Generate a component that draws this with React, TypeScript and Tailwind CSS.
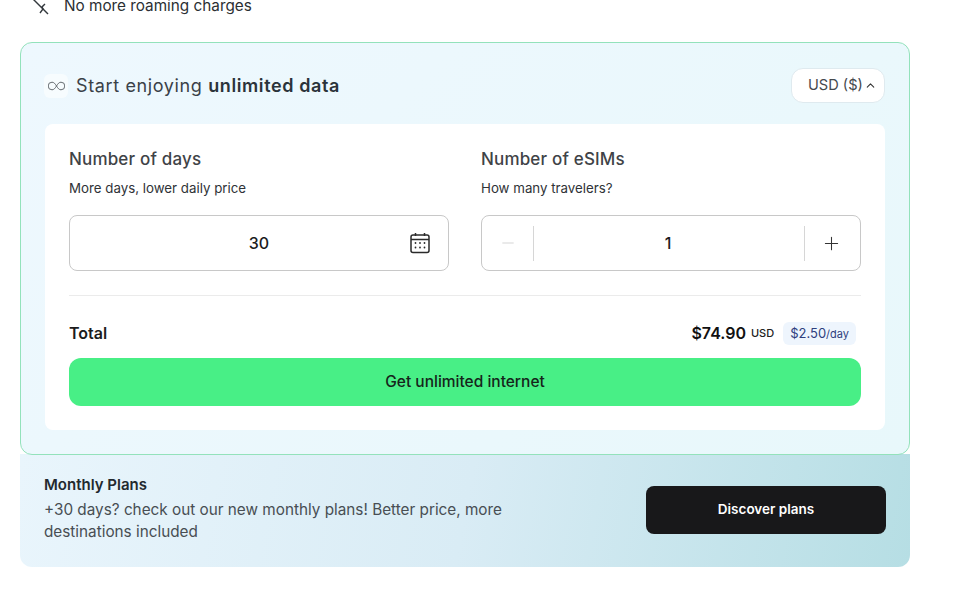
import { Minus, Plus, ChevronUp } from "lucide-react";

export default function App() {
  return (
    <div className="w-[954px] h-[595px] overflow-hidden bg-white text-[#1f2328] font-['Inter','Liberation_Sans',sans-serif]">
      <div className="flex items-center h-5 -mt-[4px] pl-[30px] gap-[14px] text-[15.3px] text-[#2b2f33]">
        <svg width="20" height="20" viewBox="0 0 20 20" fill="none" stroke="#33383d" strokeWidth="1.4" className="-mt-[2px]">
          <path d="M3 4 L18 19" />
          <path d="M10 18l3-4-1-2 3-3" />
        </svg>
        <span>No more roaming charges</span>
      </div>

      <div className="ml-5 mt-[26px] w-[890px]">
        <div className="relative z-10 h-[413px] rounded-xl border border-[#93e2bb] bg-[linear-gradient(135deg,#eef8fe,#e8f8fb)] px-6 pt-[25px]">
          <div className="flex items-center justify-between h-[35px]">
            <div className="flex items-center gap-[8px]">
              <span className="flex h-6 w-6 items-center justify-center rounded-md bg-[#f7fcfe] -ml-[1px]">
                <svg width="17" height="10" viewBox="0 0 17 10" fill="none" stroke="#666c71" strokeWidth="1">
                  <path d="M8.5 5C7 2.5 5.8 1.2 4 1.2a3.8 3.8 0 0 0 0 7.6c1.8 0 3-1.3 4.5-3.8s2.700-3.800 4.500-3.800a3.800 3.800 0 0 1 0 7.600c-1.800 0-3-1.300-4.500-3.800z" />
                </svg>
              </span>
              <span className="text-[18px] tracking-[0.035em] text-[#3a4148]">
                Start enjoying <b className="font-semibold tracking-[0.033em] text-[#2b333a]">unlimited data</b>
              </span>
            </div>
            <div className="flex h-[35px] w-[94px] items-center justify-start gap-[1px] rounded-xl border border-[#dfeaef] bg-white pl-4 text-[14.6px] text-[#45494d]">
              USD ($)
              <ChevronUp size={13} strokeWidth={2} className="text-[#333]" />
            </div>
          </div>

          <div className="mt-[21px] h-[306px] rounded-lg bg-white px-6 pt-[25px]">
            <div className="grid grid-cols-2 gap-8">
              <div>
                <div className="text-[17px] tracking-[0.01em] leading-[20px] font-medium text-[#3f4347]">Number of days</div>
                <div className="mt-[10px] text-[13.3px] leading-[18px] text-[#2f3337]">More days, lower daily price</div>
                <div className="relative mt-[18px] flex h-14 items-center justify-center rounded-lg border border-[#c8c8c8] text-[16px] font-medium text-[#1c1c1c]">
                  30
                  <svg width="22" height="22" viewBox="0 0 22 22" fill="none" stroke="#2b2b2b" strokeWidth="1.5" className="absolute right-[17px] top-[16px]">
                    <rect x="2" y="3" width="18" height="17.500" rx="2" />
                    <path d="M2 7.500h18M6.500 1v3M15.500 1v3" />
                    <g stroke="none" fill="#2b2b2b">
                      <circle cx="6.500" cy="11" r="0.900" />
                      <circle cx="11" cy="11" r="0.900" />
                      <circle cx="15.500" cy="11" r="0.900" />
                      <circle cx="6.500" cy="15.500" r="0.900" />
                      <circle cx="11" cy="15.500" r="0.900" />
                      <circle cx="15.500" cy="15.500" r="0.900" />
                    </g>
                  </svg>
                </div>
              </div>
              <div>
                <div className="text-[17px] tracking-[0.01em] leading-[20px] font-medium text-[#3f4347]">Number of eSIMs</div>
                <div className="mt-[10px] text-[13.3px] leading-[18px] text-[#2f3337]">How many travelers?</div>
                <div className="mt-[18px] flex h-14 items-center rounded-lg border border-[#c8c8c8]">
                  <div className="flex h-[35px] w-[52px] items-center justify-center border-r border-[#d6d6d6]">
                    <Minus size={18} strokeWidth={1.2} className="text-[#d0d0d0]" />
                  </div>
                  <div className="flex-1 pr-[2px] text-center text-[16px] font-medium text-[#1c1c1c]">1</div>
                  <div className="flex h-[35px] w-[56px] items-center justify-center border-l border-[#d6d6d6] pr-[2px]">
                    <Plus size={21} strokeWidth={1.2} className="text-[#333]" />
                  </div>
                </div>
              </div>
            </div>

            <div className="mt-6 border-t border-[#ebebeb]" />

            <div className="mt-[24px] flex h-[26px] items-center justify-between">
              <span className="text-[16px] font-semibold text-[#1c1c1c]">Total</span>
              <div className="flex items-center pr-[5px]">
                <span className="text-[16px] font-semibold text-[#111]">$74.90</span>
                <span className="ml-[5px] text-[11px] font-medium text-[#222]">USD</span>
                <span className="ml-[9px] rounded-md bg-[#eef5fd] px-[7px] py-[3px] text-[13px] leading-[16px] text-[#2f3f7d]">
                  $2.50<span className="text-[11px]">/day</span>
                </span>
              </div>
            </div>

            <div className="mt-[12px] flex h-12 items-center justify-center rounded-xl bg-[#48ef86] text-[15.5px] font-medium text-[#16251b]">
              Get unlimited internet
            </div>
          </div>
        </div>

        <div className="-mt-[1px] flex h-[113px] items-center justify-between rounded-b-xl bg-[linear-gradient(100deg,#e9f5fc,#d9ecf5_50%,#b6dee4)] px-6 pb-[2px]">
          <div className="mb-[2px] w-[480px]">
            <div className="text-[15px] leading-[20px] font-semibold text-[#23292e]">Monthly Plans</div>
            <div className="mt-[4px] text-[15.300px] leading-[22px] text-[#484e53]">
              +30 days? check out our new monthly plans! Better price, more destinations included
            </div>
          </div>
          <div className="flex h-12 w-[240px] items-center justify-center rounded-lg bg-[#18181a] text-[13.500px] font-semibold text-white">
            Discover plans
          </div>
        </div>
      </div>
    </div>
  );
}
